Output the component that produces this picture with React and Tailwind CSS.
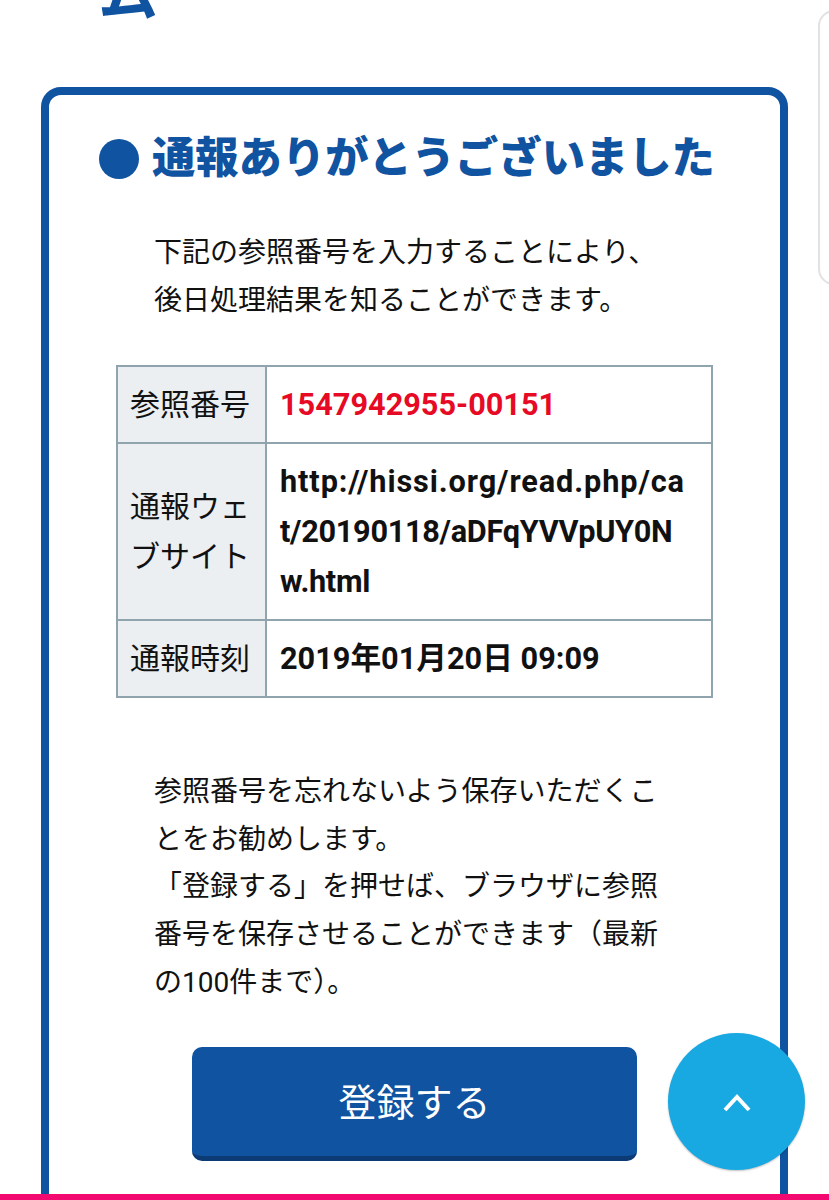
const FONT = "font-['Roboto','Noto_Sans_CJK_JP',sans-serif]";

function InfoRow({ label, children }) {
  return (
    <tr>
      <th className="w-[149px] border-2 border-[#90a4ae] bg-[#eceff1] px-[12px] py-[12.5px] text-left text-[30px] leading-[50px] font-normal">
        {label}
      </th>
      <td className="border-2 border-[#90a4ae] py-[12.5px] pr-[21px] pl-[13px] text-[30.7px] leading-[50px] font-bold break-all">
        {children}
      </td>
    </tr>
  );
}

export default function App() {
  return (
    <div className={`relative h-[1200px] overflow-hidden bg-white text-[#111] ${FONT}`}>
      {/* 切れた見出しの一部 */}
      <div className="h-[87px] overflow-hidden pl-[98px]">
        <p className="-mt-[36px] text-[60px] leading-[64px] font-bold text-[#1053a1]">ム</p>
      </div>

      <div className="mx-[41px] h-[1200px] rounded-[20px] border-8 border-[#1053a1] pt-[34px]">
        <h2 className="flex items-center pl-[50px] text-[43.3px] leading-[60px] font-black whitespace-nowrap text-[#1053a1]">
          <span className="mr-[13px] h-[40px] w-[40px] rounded-full bg-[#1053a1]" />
          通報ありがとうございました
        </h2>

        <p className="mt-[40px] px-[105px] text-[28px] leading-[47.6px] whitespace-nowrap">
          下記の参照番号を入力することにより、
          <br />
          後日処理結果を知ることができます。
        </p>

        <table className="mt-[41px] ml-[67px] w-[597px] table-fixed border-collapse">
          <tbody>
            <InfoRow label="参照番号">
              <span className="text-[#e60a24]">1547942955-00151</span>
            </InfoRow>
            <InfoRow label="通報ウェブサイト">
              <span className="tracking-[0.9px]">http://hissi.org/read.php/ca</span>
              <span className="tracking-[-0.3px]">t/20190118/aDFqYVVpUY0Nw.html</span>
            </InfoRow>
            <InfoRow label="通報時刻">2019年01月20日 09:09</InfoRow>
          </tbody>
        </table>

        <p className="mt-[70px] ml-[105px] w-[504px] text-[28px] leading-[47.6px]">
          参照番号を忘れないよう保存いただくことをお勧めします。
          <br />
          「登録する」を押せば、ブラウザに参照番号を保存させることができます（最新の100件まで）。
        </p>

        <button
          type="button"
          className="mt-[41px] ml-[143px] block h-[114px] w-[445px] rounded-[10px] border-b-[5px] border-[#0b3a75] bg-[#1053a1] pt-[3px] text-[38px] text-white"
        >
          登録する
        </button>
      </div>

      {/* 右上のオーバーレイのふち */}
      <div className="absolute top-[10px] -right-[30px] h-[275px] w-[41px] rounded-[16px] border-2 border-[#e2e2e2] bg-white" />

      {/* トップへ戻るボタン */}
      <div className="absolute top-[1033px] left-[668px] flex h-[137px] w-[137px] items-center justify-center rounded-full bg-[#18a8e2] shadow-[0_1px_2px_rgba(0,0,0,0.25)]">
        <svg width="30" height="20" viewBox="0 0 30 20" fill="none" stroke="white" strokeWidth="4">
          <path d="M3 18 L15 5 L27 18" />
        </svg>
      </div>

      <div className="absolute inset-x-0 bottom-0 h-[6px] bg-[#f20a70]" />
    </div>
  );
}
